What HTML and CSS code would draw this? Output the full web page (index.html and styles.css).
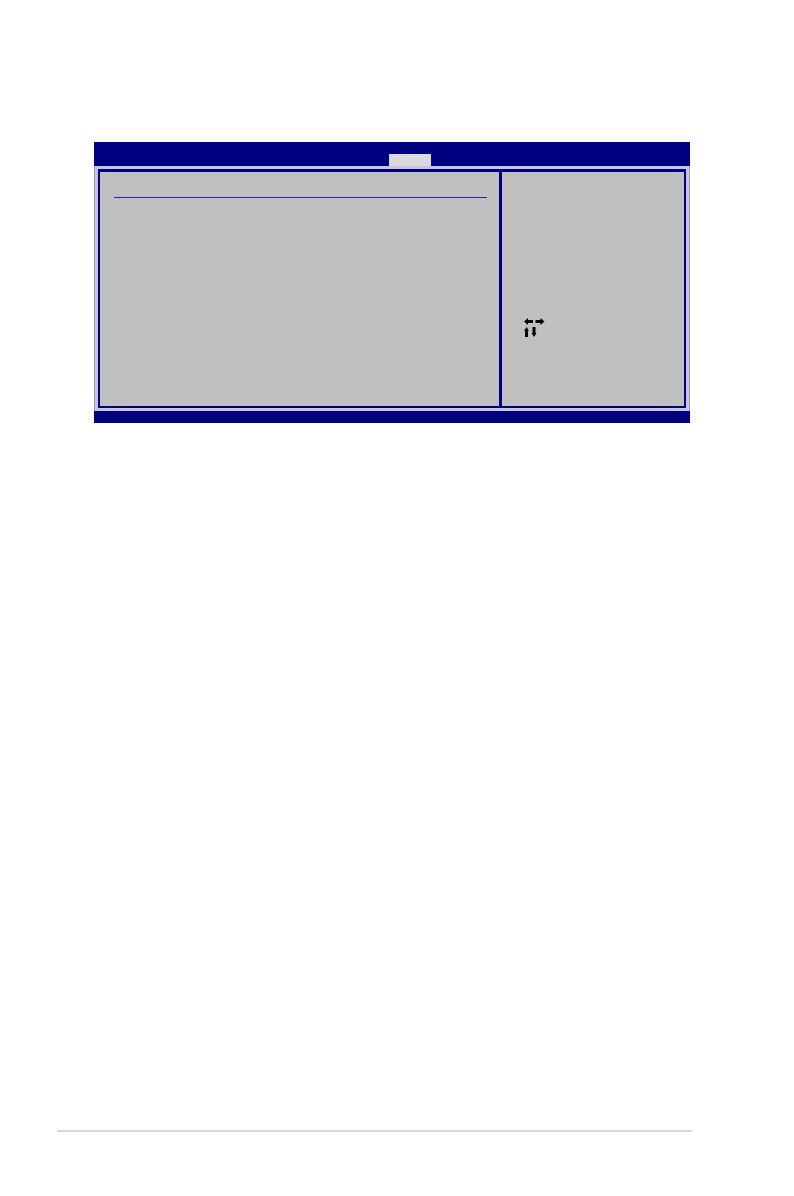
FILE: index.html
```html
<!DOCTYPE html>
<html lang="en">
<head>
<meta charset="utf-8">
<title>Setup screen</title>
<link rel="stylesheet" href="styles.css">
</head>
<body>
<main class="page">
  <section class="setup">
    <header class="menu-bar"><div class="active-tab"></div></header>
    <div class="body">
      <div class="frame">
        <div class="options"><hr class="rule"></div>
        <aside class="help">
          <svg class="keys" width="22" height="20" viewBox="0 0 22 20" role="img" aria-label="Arrow keys">
            <path d="M0 3.500 4 0V2H9V5H4V7ZM20.500 3.500 16.500 0V2H11.500V5H16.500V7Z"/>
            <path d="M2.500 9 5 13H4V19H1V13H0ZM10 19 7.500 15H8.500V9H11.500V15H12.500Z"/>
          </svg>
        </aside>
      </div>
    </div>
    <footer class="bottom-bar"></footer>
  </section>
  <hr class="page-rule">
</main>
</body>
</html>
```
FILE: styles.css
```css
* {
  box-sizing: border-box;
}

body {
  margin: 0;
  background: #fff;
  font-family: "Liberation Sans", sans-serif;
}

.page {
  display: flex;
  flex-direction: column;
  min-height: 100vh;
  padding: 142px 102px 64px 57px;
}

.setup {
  margin: 0 2px 0 37px;
}

.menu-bar {
  display: flex;
  align-items: flex-end;
  height: 24px;
  padding-left: 295px;
  background: #000080;
}

.active-tab {
  width: 42px;
  height: 12px;
  background: #d9d9de;
}

.body {
  padding: 3px;
  border: solid #9c9ac0;
  border-width: 0 1px;
  background: #c6c5dc;
}

.frame {
  display: grid;
  grid-template-columns: 1fr 185px;
  min-height: 239px;
  border: 2px solid #000080;
  border-top-width: 3px;
  background: #c0c0c0;
}

.options {
  padding: 25px 12px 0 14px;
}

.rule {
  height: 1px;
  margin: 0;
  border: 0;
  background: #1c2c96;
}

.help {
  padding: 146px 22px 0;
  border-left: 3px solid #000080;
}

.keys {
  display: block;
}

.bottom-bar {
  height: 12px;
  background: #000080;
}

.page-rule {
  width: 100%;
  height: 2px;
  margin: auto 0 0;
  border: 0;
  background: #d8d8d8;
}
```
